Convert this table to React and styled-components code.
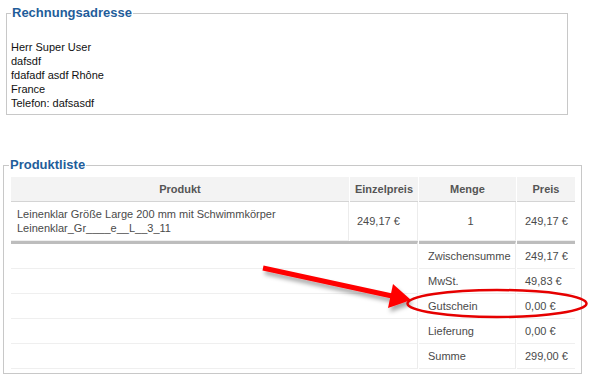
import React from 'react';
import styled, { createGlobalStyle } from 'styled-components';

// 기본 스타일 초기화
const GlobalStyle = createGlobalStyle`
  body {
    margin: 0;
    background: #fff;
    font-family: "Liberation Sans", Arial, sans-serif;
    font-size: 11px;
    color: #222;
  }
`;

const Page = styled.div`
  position: relative;
  width: 592px;
  height: 385px;
  overflow: hidden;
`;

// 테두리 박스 (fieldset + legend)
const Box = styled.fieldset`
  margin: ${p => p.$top}px 0 0 ${p => p.$left}px;
  width: ${p => p.$width}px;
  padding: 0;
  border: 1px solid #c8c8c8;
  box-sizing: border-box;
  min-width: 0;
`;

const Title = styled.legend`
  margin-left: ${p => p.$indent}px;
  padding: 0 1px;
  font-size: 13px;
  line-height: 16px;
  font-weight: bold;
  color: #1f5d9a;
`;

const Address = styled.div`
  padding: 19px 0 4px 4px;
  line-height: 14px;
  color: #111;
`;

const Table = styled.table`
  margin: 4px 0 4px 6px;
  width: 566px;
  border-collapse: separate;
  border-spacing: 1px 0;
  table-layout: fixed;
  color: #4a4a4a;
`;

const Head = styled.th`
  height: 24px;
  padding: 0;
  background: #f3f3f3;
  border-bottom: 1px solid #d4d4d4;
  font-weight: bold;
  color: #555;
  text-align: center;
`;

const Cell = styled.td`
  height: ${p => (p.$tall ? 38 : 24)}px;
  padding: 0 0 0 ${p => p.$pad || 7}px;
  text-align: ${p => p.$align || 'left'};
  vertical-align: middle;
  line-height: 14px;
  border-right: ${p => (p.$last ? 'none' : '1px solid #ececec')};
  border-bottom: 1px solid #efefef;
  border-top: ${p => (p.$first ? '3px solid #bdbdbd' : 'none')};
`;

const totals = [
  ['Zwischensumme', '249,17 €'],
  ['MwSt.', '49,83 €'],
  ['Gutschein', '0,00 €'],
  ['Lieferung', '0,00 €'],
  ['Summe', '299,00 €'],
];

// 빨간 화살표 + 동그라미 표시
function Marker() {
  return (
    <svg
      width="592"
      height="385"
      style={{ position: 'absolute', left: 0, top: 0, pointerEvents: 'none' }}
    >
      <defs>
        <filter id="shade" x="-20%" y="-50%" width="140%" height="200%">
          <feDropShadow dx="2" dy="4" stdDeviation="2" floodColor="#000" floodOpacity="0.35" />
        </filter>
      </defs>
      <g filter="url(#shade)" fill="#ff0000" stroke="none">
        <line x1="263" y1="268" x2="392" y2="296" stroke="#ff0000" strokeWidth="5" />
        <polygon points="411,300 388,308 393,284" />
      </g>
      <ellipse cx="497" cy="303.5" rx="89.5" ry="13.5" fill="none" stroke="#e60000" strokeWidth="2.5" />
    </svg>
  );
}

export default function App() {
  return (
    <Page>
      <GlobalStyle />
      <Box $top={5} $left={6} $width={562}>
        <Title $indent={4}>Rechnungsadresse</Title>
        <Address>
          Herr Super User<br />
          dafsdf<br />
          fdafadf asdf Rhône<br />
          France<br />
          Telefon: dafsasdf
        </Address>
      </Box>

      <Box $top={42} $left={3} $width={579}>
        <Title $indent={5}>Produktliste</Title>
        <Table>
          <colgroup>
            <col style={{ width: 338 }} />
            <col style={{ width: 68 }} />
            <col style={{ width: 97 }} />
            <col style={{ width: 58 }} />
          </colgroup>
          <thead>
            <tr>
              <Head>Produkt</Head>
              <Head>Einzelpreis</Head>
              <Head>Menge</Head>
              <Head>Preis</Head>
            </tr>
          </thead>
          <tbody>
            <tr>
              <Cell $tall $pad={6}>
                Leinenklar Größe Large 200 mm mit Schwimmkörper<br />
                Leinenklar_Gr____e__L__3_11
              </Cell>
              <Cell $tall>249,17 €</Cell>
              <Cell $tall $align="center" $pad={0}>1</Cell>
              <Cell $tall $last $pad={8}>249,17 €</Cell>
            </tr>
            {totals.map(([label, value], i) => (
              <tr key={label}>
                <Cell colSpan={2} $first={i === 0} />
                <Cell $first={i === 0} $pad={9}>{label}</Cell>
                <Cell $first={i === 0} $last $pad={8}>{value}</Cell>
              </tr>
            ))}
          </tbody>
        </Table>
      </Box>
      <Marker />
    </Page>
  );
}
